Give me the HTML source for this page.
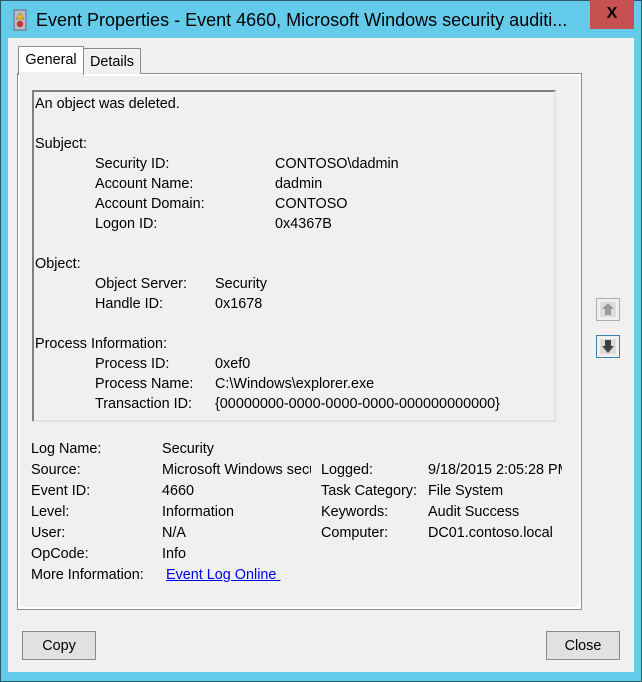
<!DOCTYPE html>
<html><head><meta charset="utf-8"><style>
*{margin:0;padding:0;box-sizing:border-box}
body{width:642px;height:682px;overflow:hidden;background:#65cbea;font-family:"Liberation Sans",sans-serif;font-size:14.4px;color:#000;position:relative}
.a{position:absolute;white-space:nowrap;line-height:20px;padding-top:1px}
#win{position:absolute;left:0;top:0;width:642px;height:682px;border:1px solid #2b5b6b}
#title{position:absolute;left:36px;top:9px;font-size:18px;line-height:22px;color:#000}
#close{position:absolute;left:590px;top:0;width:44px;height:29px;background:#c75050;color:#000;font-weight:bold;font-size:16px;text-align:center;line-height:28px}
#client{position:absolute;left:8px;top:38px;width:626px;height:634px;background:#f0f0f0}
#panel{position:absolute;left:17px;top:73px;width:565px;height:537px;border:1px solid #8c8c8c;background:#f0f0f0;box-shadow:inset 0 0 0 2px #fff}
.tab{position:absolute;border:1px solid #8c8c8c;border-bottom:none;background:#f0f0f0;text-align:center}
#box{position:absolute;left:32px;top:90px;width:524px;height:332px;border:2px solid;border-color:#808080 #e3e3e3 #e3e3e3 #808080;background:#f0f0f0}
.btn{position:absolute;top:631px;width:74px;height:29px;border:1px solid #8a8a8a;background:#e1e1e1;text-align:center;line-height:28px}
.clip{overflow:hidden}
</style></head><body>
<div id="win"></div>
<svg style="position:absolute;left:13px;top:9px" width="14" height="22" viewBox="0 0 14 22">
<rect x="1" y="1" width="12" height="20" fill="#b8bcc8" stroke="#6a7080"/>
<polygon points="7,4 11,10 3,10" fill="#f0c020" stroke="#806000" stroke-width=".5"/>
<circle cx="7" cy="15" r="3.2" fill="#d03030"/>
</svg>
<div id="title">Event Properties - Event 4660, Microsoft Windows security auditi...</div>
<div id="close">X</div>
<div id="client"></div>
<div id="panel"></div>
<div class="tab" style="left:83px;top:48px;width:58px;height:26px;line-height:26px">Details</div>
<div class="tab" style="left:18px;top:46px;width:66px;height:29px;line-height:26px;background:#fff">General</div>
<div class="tab" style="left:19px;top:72px;width:64px;height:4px;border:none;background:#f0f0f0"></div>
<div id="box"></div>
<div class="a" style="left:35px;top:93px">An object was deleted.</div>
<div class="a" style="left:35px;top:133px">Subject:</div>
<div class="a" style="left:95px;top:153px">Security ID:</div><div class="a" style="left:275px;top:153px">CONTOSO\dadmin</div>
<div class="a" style="left:95px;top:173px">Account Name:</div><div class="a" style="left:275px;top:173px">dadmin</div>
<div class="a" style="left:95px;top:193px">Account Domain:</div><div class="a" style="left:275px;top:193px">CONTOSO</div>
<div class="a" style="left:95px;top:213px">Logon ID:</div><div class="a" style="left:275px;top:213px">0x4367B</div>
<div class="a" style="left:35px;top:253px">Object:</div>
<div class="a" style="left:95px;top:273px">Object Server:</div><div class="a" style="left:215px;top:273px">Security</div>
<div class="a" style="left:95px;top:293px">Handle ID:</div><div class="a" style="left:215px;top:293px">0x1678</div>
<div class="a" style="left:35px;top:333px">Process Information:</div>
<div class="a" style="left:95px;top:353px">Process ID:</div><div class="a" style="left:215px;top:353px">0xef0</div>
<div class="a" style="left:95px;top:373px">Process Name:</div><div class="a" style="left:215px;top:373px">C:\Windows\explorer.exe</div>
<div class="a" style="left:95px;top:393px">Transaction ID:</div><div class="a" style="left:215px;top:393px">{00000000-0000-0000-0000-000000000000}</div>

<div class="a" style="left:31px;top:438px">Log Name:</div><div class="a" style="left:162px;top:438px">Security</div>
<div class="a" style="left:31px;top:459px">Source:</div><div class="a clip" style="left:162px;top:459px;width:149px">Microsoft Windows security</div>
<div class="a" style="left:321px;top:459px">Logged:</div><div class="a clip" style="left:428px;top:459px;width:134px">9/18/2015 2:05:28 PM</div>
<div class="a" style="left:31px;top:480px">Event ID:</div><div class="a" style="left:162px;top:480px">4660</div>
<div class="a" style="left:321px;top:480px">Task Category:</div><div class="a" style="left:428px;top:480px">File System</div>
<div class="a" style="left:31px;top:501px">Level:</div><div class="a" style="left:162px;top:501px">Information</div>
<div class="a" style="left:321px;top:501px">Keywords:</div><div class="a" style="left:428px;top:501px">Audit Success</div>
<div class="a" style="left:31px;top:522px">User:</div><div class="a" style="left:162px;top:522px">N/A</div>
<div class="a" style="left:321px;top:522px">Computer:</div><div class="a" style="left:428px;top:522px">DC01.contoso.local</div>
<div class="a" style="left:31px;top:543px">OpCode:</div><div class="a" style="left:162px;top:543px">Info</div>
<div class="a" style="left:31px;top:564px">More Information:</div><div class="a" style="left:166px;top:564px;color:#0000ee;text-decoration:underline">Event Log Online&nbsp;</div>

<div style="position:absolute;left:596px;top:298px;width:24px;height:23px;border:1px solid #adadad;background:#f0f0f0">
<svg width="22" height="21" viewBox="0 0 22 21"><rect x="3" y="3" width="16" height="15" fill="#dcdcdc"/><polygon points="11,4 17,10 14,10 14,16 8,16 8,10 5,10" fill="#9a9a9a"/></svg></div>
<div style="position:absolute;left:596px;top:335px;width:24px;height:23px;border:1px solid #3c7fb1;background:#f0f0f0">
<svg width="22" height="21" viewBox="0 0 22 21"><rect x="3" y="3" width="16" height="15" fill="#dcdcdc"/><polygon points="8,4 14,4 14,10 17,10 11,17 5,10 8,10" fill="#404040"/></svg></div>

<div class="btn" style="left:22px">Copy</div>
<div class="btn" style="left:546px">Close</div>
</body></html>
